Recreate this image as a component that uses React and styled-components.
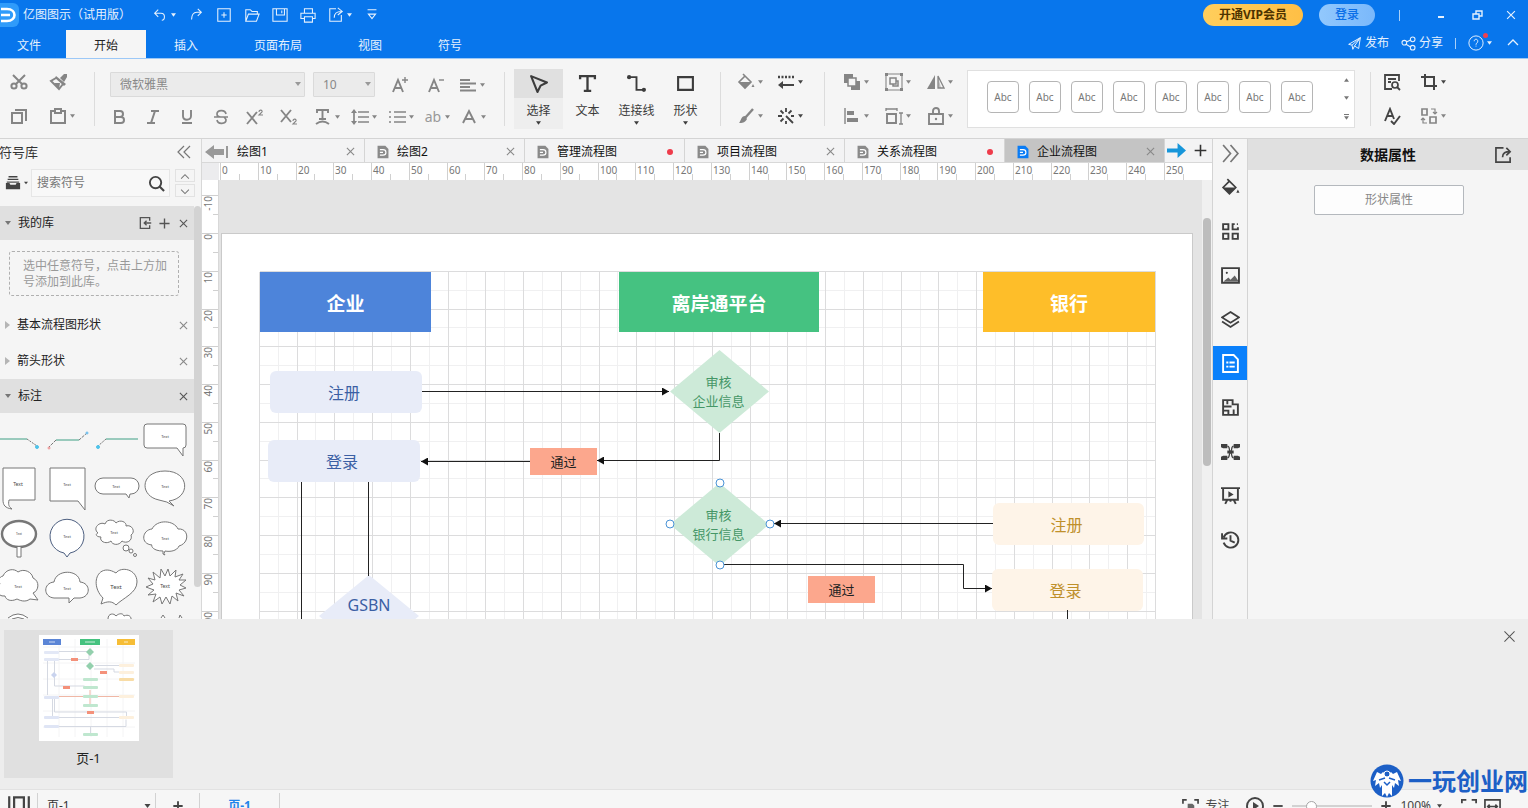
import React from "react";
import styled, { createGlobalStyle, css } from "styled-components";

const GlobalStyle = createGlobalStyle`
  *, *::before, *::after { box-sizing: border-box; }
  html, body { margin: 0; height: 100%; }
  body, button, input, select {
    font-family: "Noto Sans", "Noto Sans CJK SC", sans-serif;
    font-size: 12px;
    line-height: 16px;
  }
  body { color: #222; background: #f5f5f5; overflow: hidden; }
  button { border: 0; padding: 0; background: none; color: inherit; cursor: pointer; }
  svg { display: block; flex: none; }
`;

/* ---------- icons ---------- */

const L = (d, extra) => <path d={d} fill="none" stroke="currentColor" strokeWidth="1.6" {...extra} />;
const F = (d, extra) => <path d={d} fill="currentColor" {...extra} />;

const ICONS = {
  undo: L("M7 3L3 7l4 4M3 7h7c3 0 4 2 4 4s-1 4-3 4", { strokeWidth: 1.2 }),
  redo: L("M11 2l4 4-4 4M15 6h-5c-4 0-6 3-6 8", { strokeWidth: 1.2 }),
  newDoc: L("M2 2h14v14H2zM9 6v6M6 9h6", { strokeWidth: 1.2 }),
  open: L("M2 16V3h5l2 2h6v3M2 16l3-8h12l-3 8z", { strokeWidth: 1.2 }),
  save: L("M1 2h16v14H1zM5 2v7h9V2M11 4v3", { strokeWidth: 1.2 }),
  print: L("M5 7V2h9v5M5 13H1V7h16v6h-3M5 11h9v6H5z", { strokeWidth: 1.2 }),
  share: L("M9 2H2v14h13V9M7 12c0-5 3-7 8-7M11 1l5 4-5 4", { strokeWidth: 1.2 }),
  more: L("M4 3h10M5 8l4 5 4-5z", { strokeWidth: 1.2 }),
  plane: L("M2 10L16 2l-2 13-5-3-2 4-1-5zM6 11l10-9-7 10", { strokeWidth: 1.2 }),
  nodes: (
    <g fill="none" stroke="currentColor" strokeWidth="1.3">
      <circle cx="4" cy="8" r="2.8" /><circle cx="14" cy="4" r="2.8" /><circle cx="14" cy="14" r="2.8" />
      <path d="M7 7l4-2M6 10l5 3" />
    </g>
  ),
  help: (
    <g fill="none" stroke="currentColor" strokeWidth="1.1">
      <circle cx="9" cy="9" r="8" /><path d="M7 7c0-3 4-3 4 0 0 2-2 2-2 4M9 12v1" />
    </g>
  ),
  chevronUp: L("M4 11l5-5 5 5", { strokeWidth: 1.3 }),
  chevronDown: L("M4 6l5 5 5-5", { strokeWidth: 1.3 }),
  min: L("M6 11h6", { strokeWidth: 2 }),
  restore: L("M5 8h6v5H5zM8 8V5h6v5h-3", { strokeWidth: 1.4 }),
  close: L("M4 4l10 10M14 4L4 14", { strokeWidth: 1.5 }),
  closeThin: L("M2 2l14 14M16 2L2 16", { strokeWidth: 1.4 }),
  cut: (
    <g fill="none" stroke="currentColor" strokeWidth="2">
      <circle cx="4" cy="13" r="2.6" /><circle cx="14" cy="13" r="2.6" /><path d="M3 2l9 9M15 2L6 11" />
    </g>
  ),
  brush: (
    <g>
      {F("M7 3l10 8-2 2-9-8zM11 5l4-4h3v3l-3 5z")}
      {L("M7 5L2 8l8 8 4-5", { strokeWidth: 2 })}
      {F("M5 10h6l-1 6z")}
    </g>
  ),
  copy: L("M2 6h10v10H2zM5 3h11v11", { strokeWidth: 2 }),
  paste: L("M6 4H2v12h14V4h-4M6 2h6v4H6z", { strokeWidth: 2 }),
  fontUp: (
    <g>{L("M2 16L7 4l5 12M4 12h6", { strokeWidth: 1.9 })}{L("M14 1v6M11 4h6", { strokeWidth: 1.4 })}</g>
  ),
  fontDown: (
    <g>{L("M2 16L7 4l5 12M4 12h6", { strokeWidth: 1.9 })}{L("M12 4h5", { strokeWidth: 1.4 })}</g>
  ),
  align: L("M1 4h10M1 7.500h16M1 11h10M1 14.500h16", { strokeWidth: 2 }),
  bold: L("M5 3h5a3 3 0 0 1 0 6H5zM5 9h6a3 3 0 0 1 0 6H5z", { strokeWidth: 2 }),
  italic: L("M7 3h8M3 15h8M11 3L7 15", { strokeWidth: 2 }),
  underline: L("M5 2v6c0 5 8 5 8 0V2M4 15h10", { strokeWidth: 1.9 }),
  strike: L("M14 6c-1-5-9-4-9 0 0 2 2 3 4 3M5 12c1 5 9 4 9 0 0-1-1-2-2-3M2 9h14", { strokeWidth: 1.7 }),
  sup: <g>{L("M1 4l10 12M11 4L1 16", { strokeWidth: 1.9 })}{L("M13 4c0-3 4-2 3 0l-3 3h4", { strokeWidth: 1.1 })}</g>,
  sub: <g>{L("M1 2l10 12M11 2L1 14", { strokeWidth: 1.9 })}{L("M13 13c0-3 4-2 3 0l-3 3h4", { strokeWidth: 1.1 })}</g>,
  textFx: L("M3 5V2h11v3M8.500 2v9M5 11h7M2 16c4-3 9-3 13 0", { strokeWidth: 1.9 }),
  spacing: <g>{L("M7 4h11M7 9h11M7 14h11M3 4v10", { strokeWidth: 1.7 })}{F("M0 5l3-4 3 4zM0 13l3 4 3-4z")}</g>,
  list: L("M6 4h12M6 9h12M6 14h12M1 4h2M1 9h2M1 14h2", { strokeWidth: 1.7 }),
  fontColor: L("M3 15L9 3l6 12M5 11h8", { strokeWidth: 1.9 }),
  cursor: L("M2 2l15 6-6 3-3 6z", { strokeWidth: 2, strokeLinejoin: "round" }),
  textTool: L("M2 5V2h14v3M9 2v14M5.500 16h7", { strokeWidth: 2.2 }),
  connector: <g>{L("M3 3h6v12h6", { strokeWidth: 1.8 })}<circle cx="2" cy="3" r="2" fill="currentColor" /><circle cx="16" cy="15" r="2" fill="currentColor" /></g>,
  rect: L("M2 3h14v12H2z", { strokeWidth: 2 }),
  fill: <g>{L("M6 1l8 8-6 6-6-6 6-6", { strokeWidth: 1.6 })}{F("M2 9h12l-6 6zM16 11l1.500 3h-3z")}</g>,
  lineStyle: <g>{L("M1 4h16", { strokeWidth: 2.500, strokeDasharray: "2 1.500" })}{L("M4 12h13", { strokeWidth: 2 })}{F("M1 12l5-4v8z")}</g>,
  pen: <g>{L("M16 2L8 11", { strokeWidth: 2.400 })}{F("M8 9l2 3c-2 4-5 4-8 4 2-2 2-7 6-7z")}</g>,
  magic: L("M9 1v4M9 14v3M1 9h4M14 9h3M3.500 3.500l3 3M14.500 3.500l-3 3M3.500 14.500l3-3M9 9l7 7", { strokeWidth: 1.8 }),
  arrange: <g>{F("M1 1h9v9H1zM8 13h5V8h4v9H8z")}<path d="M5 5h8v8H5z" fill="#f5f5f5" stroke="currentColor" strokeWidth="1.5" /></g>,
  group: <g>{L("M1 1h16v16H1z", { strokeWidth: 1.1 })}{L("M5 5h6v6H5zM11 8h2v5H8v-2", { strokeWidth: 1.5 })}{F("M0 0h3v3H0zM15 0h3v3h-3zM0 15h3v3H0zM15 15h3v3h-3z")}</g>,
  flip: <g>{F("M8 2v14H0z")}{L("M11 3v12h6z", { strokeWidth: 1.3 })}{F("M11 3v12h3z", { opacity: 0.5 })}</g>,
  alignObj: <g>{L("M2 1v16", { strokeWidth: 1.4 })}{F("M4 4h7v4H4zM4 11h11v4H4z")}</g>,
  sizeObj: <g>{L("M2 7h9v9H2z", { strokeWidth: 1.9 })}{L("M1 2h11M1 1v3M12 1v3M16 6v11M14 6h4M14 17h4", { strokeWidth: 1.3 })}</g>,
  lock: <g>{L("M2 7h14v10H2zM6 7V4c0-4 6-4 6 0v3", { strokeWidth: 1.9 })}<circle cx="9" cy="12" r="1.200" fill="currentColor" /></g>,
  findDoc: <g>{L("M16 8V2H2v14h7M5 6h8M5 9h3", { strokeWidth: 1.8 })}<circle cx="12" cy="12" r="3" fill="none" stroke="currentColor" strokeWidth="1.700" />{L("M14 14l3 3", { strokeWidth: 1.8 })}</g>,
  crop: L("M1 4h13v13M5 1v12h12", { strokeWidth: 2 }),
  spell: L("M2 14L7 2l4 10M4 9h6M8 14l3 3 6-8", { strokeWidth: 1.9 }),
  swap: <g>{L("M2 2h5v6H2zM10 10h6v6h-6z", { strokeWidth: 1.700 })}{L("M11 2h4v4M13 5l2 2 2-2M7 16H3v-4M1 13l2-2 2 2", { strokeWidth: 1.2 })}</g>,
  chevronsLeft: L("M9 3L3 9l6 6M15 3L9 9l6 6", { strokeWidth: 1.2 }),
  chevronsRight: L("M2 1l7 8-7 8M9 1l7 8-7 8", { strokeWidth: 1.6 }),
  box: <g>{F("M1 9h4l1 2h6l1-2h4v7H1z")}{L("M4 2h10M3 5h12", { strokeWidth: 1.5 })}{L("M2 8h14", { strokeWidth: 1.300 })}</g>,
  search: <g><circle cx="8" cy="8" r="6" fill="none" stroke="currentColor" strokeWidth="2" />{L("M12 12l5 5", { strokeWidth: 2.2 })}</g>,
  importIn: L("M15 6V2H3v14h12v-4M17 9H8M11 6L8 9l3 3", { strokeWidth: 1.7 }),
  plus: L("M9 2v14M2 9h14", { strokeWidth: 1.9 }),
  plusBold: L("M9 3v12M3 9h12", { strokeWidth: 2.4 }),
  minus: L("M3 9h12", { strokeWidth: 2.4 }),
  doc: <g>{F("M2 1h10l4 4v12H2z")}<path d="M5 6h4c5 0 5 7 0 7H5M5 9.500h4" fill="none" stroke="#fff" strokeWidth="1.500" /></g>,
  arrowRight: F("M0 7h10V2l8 7-8 7v-5H0z"),
  symbols: L("M2 2h5v5H2zM2 11h5v5H2zM11 11h5v5h-5zM13 2h-2v5h5V5M15 2h1", { strokeWidth: 1.8 }),
  image: <g>{L("M1 2h16v14H1z", { strokeWidth: 1.8 })}{F("M2 15l5-4 2 2 4-4 4 6z", { opacity: 0.8 })}<circle cx="5.500" cy="6.500" r="1" fill="currentColor" /></g>,
  layers: L("M9 2l8 5-8 5-8-5zM1 11l8 5 8-5", { strokeWidth: 1.7 }),
  dataDoc: L("M2 1h10l4 4v12H2zM5 8h2M8 8h5M5 12h2M8 12h5", { strokeWidth: 1.8 }),
  floor: L("M2 2h9v4h5v10H2zM2 8h5M6 2v4M2 12h5v4M12 16v-5M7 8h3", { strokeWidth: 1.8 }),
  mind: <g>{F("M0 2h6v4H2L0 5zM12 2h6v3l-2 1h-4zM0 14l2-1h4v4H0zM12 13h4l2 1v3h-6zM6 8h6v3H6z")}{L("M6 4c3 0 1 5 3 5s0-5 3-5M6 15c3 0 1-5 3-5s0 5 3 5", { strokeWidth: 1.2 })}</g>,
  present: <g>{L("M0 2h18M2 2v11h14V2M6 13l-2 4M12 13l2 4M9 13v2", { strokeWidth: 1.8 })}{F("M7 5l5 3-5 3z")}</g>,
  history: L("M1 3v5h5M2.500 7a7.200 7.200 0 1 1 0 5M9 5v5l4 2", { strokeWidth: 1.8 }),
  export: L("M9 2H1v15h15v-5M8 12c0-5 3-6 8-6M12 2l4 4-4 4", { strokeWidth: 1.8 }),
  panels: L("M5 2h8v14H5zM1 1v16M17 1v16", { strokeWidth: 1.8 }),
  focus: <g>{L("M1 6V2h4M13 2h4v4M1 12v4h4M13 16h4v-4", { strokeWidth: 1.8 })}{F("M6 6h5l2 2v7H6z", { opacity: 0.8 })}</g>,
  play: <g><circle cx="9" cy="9" r="8" fill="none" stroke="currentColor" strokeWidth="1.900" />{F("M7 5l6 4-6 4z")}</g>,
  fit: L("M1 6V2h5M12 2h5v4M1 12v4h5M12 16h5v-4", { strokeWidth: 2 }),
  fitWidth: L("M1 2h16v14H1zM4 9h10M6 7L4 9l2 2M12 7l2 2-2 2", { strokeWidth: 1.8 }),
};

const Icon = ({ name, size = 18 }) => (
  <svg width={size} height={size} viewBox="0 0 18 18" aria-hidden="true">{ICONS[name]}</svg>
);

const Caret = ({ size = 6, up }) => (
  <svg width={size} height="4" viewBox="0 0 6 4" aria-hidden="true">
    <path d={up ? "M0 4h6L3 0z" : "M0 0h6L3 4z"} fill="currentColor" />
  </svg>
);

/* ---------- window frame ---------- */

const Window = styled.div`
  position: relative;
  display: flex;
  flex-direction: column;
  height: 100vh;
  overflow: hidden;
`;

const Header = styled.header`
  flex: none;
  color: #e6f1fd;
  background: #0876ec;
  border-bottom: 1px solid #9cc8f7;
`;

const TitleRow = styled.div`
  display: flex;
  align-items: center;
  height: 30px;
`;

const Logo = styled.div`
  display: grid;
  place-items: center;
  width: 19px;
  height: 24px;
  margin-right: 4px;
  border-radius: 0 6px 6px 0;
  background: #2f9bfa;
  color: #fff;
`;

const AppName = styled.span`
  width: 129px;
  white-space: nowrap;
`;

const QuickBar = styled.div`
  display: flex;
  align-items: center;
  gap: 12px;
`;

const QuickButton = styled.button`
  display: flex;
  align-items: center;
  gap: 3px;
`;

const Spacer = styled.div`
  flex: 1;
`;

const Pill = styled.button`
  height: 22px;
  padding: 0 16px;
  margin-right: ${(p) => (p.$gold ? 16 : 24)}px;
  border-radius: 11px;
  white-space: nowrap;
  ${(p) =>
    p.$gold
      ? css`color: #4d3300; font-weight: 700; background: linear-gradient(90deg, #ffce5c, #ffbf45);`
      : css`color: #0a6ee8; font-weight: 500; background: linear-gradient(90deg, #92c8fd, #7ab8fb);`}
`;

const Bar = styled.span`
  width: 1px;
  height: 11px;
  background: #a9d0f8;
`;

const WindowControls = styled.div`
  display: flex;
  align-items: center;
  gap: 18px;
  margin: 0 10px 0 32px;
`;

const TabRow = styled.nav`
  display: flex;
  align-items: flex-end;
  height: 28px;
`;

const MenuTab = styled.button`
  height: 28px;
  padding: 3px 28px 0;
  white-space: nowrap;
  ${(p) => p.$file && css`padding: 3px 17px 0; margin-right: 8px;`}
  ${(p) => p.$active && css`color: #222; background: #f5f5f5;`}
`;

const HeaderActions = styled.div`
  display: flex;
  align-items: center;
  align-self: flex-start;
  gap: 12px;
  height: 26px;
  padding-right: 6px;
`;

const HeaderAction = styled.button`
  position: relative;
  display: flex;
  align-items: center;
  gap: 3px;
  white-space: nowrap;
`;

const Badge = styled.i`
  position: absolute;
  top: -2px;
  left: 15px;
  width: 5px;
  height: 5px;
  border-radius: 50%;
  background: #f0404f;
`;

/* ---------- ribbon ---------- */

const Ribbon = styled.div`
  flex: none;
  display: flex;
  align-items: center;
  height: 80px;
  overflow: hidden;
  color: #555;
  background: #f5f5f5;
  border-bottom: 1px solid #d4d4d4;
`;

const Divider = styled.div`
  flex: none;
  width: 1px;
  height: 54px;
  background: #dcdcdc;
`;

const ToolGrid = styled.div`
  flex: none;
  display: grid;
  grid-template-columns: repeat(${(p) => p.$cols}, ${(p) => p.$col}px);
  grid-auto-rows: 34px;
  align-items: center;
  padding-left: ${(p) => p.$pad}px;
  width: ${(p) => p.$width}px;
`;

const ToolButton = styled.button`
  display: flex;
  align-items: center;
  gap: 3px;
  height: 24px;
  color: ${(p) => (p.$strong ? "#444" : "#858585")};
`;

const FormatGroup = styled.div`
  flex: none;
  width: 409px;
  padding: 4px 0 0 15px;
`;

const FormatRow = styled.div`
  display: grid;
  align-items: center;
  height: 32px;
  grid-template-columns: ${(p) => (p.$top ? "195px 8px 62px 16px 36px 32px 32px" : "repeat(6, 34px) repeat(2, 37px) repeat(3, 36px)")};
`;

const SelectBox = styled.label`
  position: relative;
  display: block;
  color: #999;
  & > svg { position: absolute; right: 4px; top: 10px; pointer-events: none; }
`;

const Select = styled.select`
  appearance: none;
  width: 100%;
  height: 25px;
  padding: 0 9px;
  border: 1px solid #dadada;
  border-radius: 1px;
  color: #888;
  background: #ebebeb;
`;

const AbIcon = styled.span`
  width: 18px;
  font-size: 14px;
  color: #999;
`;

const InsertGroup = styled.div`
  flex: none;
  display: flex;
  padding: 0 10px 0 9px;
`;

const InsertButton = styled.button`
  display: flex;
  flex-direction: column;
  align-items: center;
  width: 49px;
  height: 60px;
  color: #3c3c3c;
  background: ${(p) => (p.$active ? "linear-gradient(#e0e0e0 29px, #eeeeee 29px)" : "none")};
  & > span:first-child { display: grid; place-items: center; height: 30px; }
  & > span:nth-child(2) { height: 22px; line-height: 24px; white-space: nowrap; }
`;

const Gallery = styled.div`
  flex: 0 1 388px;
  display: flex;
  justify-content: space-between;
  height: 58px;
  margin-right: 15px;
  padding: 0 5px 0 19px;
  overflow: hidden;
  background: #fff;
  border: 1px solid #e0e0e0;
`;

const Samples = styled.div`
  display: flex;
  align-items: center;
  gap: 10px;
  overflow: hidden;
`;

const Sample = styled.button`
  flex: none;
  width: 32px;
  height: 32px;
  margin-bottom: 3px;
  border: 1px solid #b5b5b5;
  border-radius: 4px;
  font-size: 10px;
  color: #777;
`;

const GalleryScroll = styled.div`
  display: flex;
  flex-direction: column;
  justify-content: space-around;
  color: #777;
`;

const ExpandButton = styled.button`
  padding-top: 1px;
  border-top: 1px solid #777;
`;

/* ---------- symbol library ---------- */

const Main = styled.main`
  flex: 1;
  display: flex;
  min-height: 0;
`;

const Library = styled.aside`
  flex: none;
  display: flex;
  flex-direction: column;
  width: 202px;
  overflow: hidden;
  background: #f5f5f5;
  border-right: 1px solid #d8d8d8;
`;

const LibraryTitle = styled.div`
  flex: none;
  display: flex;
  align-items: center;
  justify-content: space-between;
  height: 26px;
  margin-left: -1px;
  padding-right: 8px;
  font-size: 13px;
  color: #333;
  & > button { color: #777; }
`;

const SearchRow = styled.div`
  flex: none;
  display: flex;
  align-items: center;
  height: 41px;
  padding: 0 5px 5px;
  color: #444;
`;

const SearchField = styled.label`
  display: flex;
  align-items: center;
  flex: 1;
  min-width: 0;
  height: 28px;
  margin: 0 5px 0 3px;
  padding: 0 4px 0 5px;
  border: 1px solid #e6e6e6;
  background: #f8f8f8;
`;

const SearchInput = styled.input`
  flex: 1;
  min-width: 0;
  padding: 0;
  border: 0;
  outline: 0;
  background: none;
  &::placeholder { color: #777; opacity: 1; }
`;

const Stepper = styled.div`
  display: grid;
  gap: 2px;
  margin-right: 1px;
`;

const StepButton = styled.button`
  display: grid;
  place-items: center;
  width: 20px;
  height: 13px;
  border: 1px solid #e2e2e2;
  color: #777;
`;

const LibraryScroll = styled.div`
  flex: 1;
  display: flex;
  align-items: flex-start;
  min-height: 0;
  overflow: hidden;
`;

const LibraryList = styled.div`
  flex: 1;
  min-width: 0;
`;

const Thumb = styled.div`
  flex: none;
  width: ${(p) => p.$width}px;
  height: ${(p) => p.$height};
  margin: ${(p) => p.$margin || 0};
  border-radius: 4px;
  background: ${(p) => p.$color};
`;

const Section = styled.div`
  display: flex;
  align-items: center;
  gap: 6px;
  height: ${(p) => (p.$open ? 34 : 36)}px;
  padding: 0 4px;
  color: ${(p) => (p.$open ? "#777" : "#b5b5b5")};
  background: ${(p) => (p.$open ? "#e0e0e0" : "none")};
  & > span { flex: 1; color: #222; white-space: nowrap; }
  & > button { color: ${(p) => (p.$open ? "#555" : "#888")}; }
`;

const EmptyHint = styled.p`
  margin: 11px 15px 11px 9px;
  padding: 6px 9px 5px 13px;
  border: 1px dashed #b0b0b0;
  border-radius: 3px;
  color: #999;
`;

const ShapeGrid = styled.div`
  display: grid;
  grid-template-columns: repeat(4, 49px);
  grid-auto-rows: 49px;
  margin-left: -6px;
`;

/* ---------- drawing area ---------- */

const Workspace = styled.section`
  flex: 1;
  display: flex;
  flex-direction: column;
  min-width: 0;
`;

const DocTabs = styled.div`
  flex: none;
  display: flex;
  height: 24px;
  padding-left: 3px;
  background: #f3f3f4;
  border-bottom: 1px solid #d8d8d8;
`;

const DocTab = styled.div`
  flex: 0 1 160px;
  display: flex;
  align-items: center;
  min-width: 0;
  padding: 2px 7px 0 ${(p) => (p.$first ? 0 : 11)}px;
  border-right: 1px solid #d5d5d5;
  color: #888;
  background: ${(p) => (p.$active ? "#c4c4c4" : "none")};
  & > span { flex: 1; margin-left: 7px; color: #111; white-space: nowrap; }
  & > svg { color: ${(p) => (p.$active ? "#0a7cf5" : "#8a8a8a")}; }
`;

const Unsaved = styled.i`
  width: 6px;
  height: 6px;
  margin-right: 4px;
  border-radius: 50%;
  background: #ee3b4b;
`;

const DocTabActions = styled.div`
  flex: none;
  display: flex;
  align-items: center;
  gap: 7px;
  padding-left: 2px;
  color: #333;
  & > button:first-child { color: #1796da; }
`;

const RulerStrip = styled.div`
  flex: none;
  height: 17px;
  overflow: hidden;
  background: #fff;
`;

const DrawRow = styled.div`
  flex: 1;
  display: flex;
  min-height: 0;
  overflow: hidden;
`;

const SideRuler = styled.div`
  flex: none;
  width: 17px;
  overflow: hidden;
  background: #fff;
`;

const Canvas = styled.div`
  flex: 1;
  position: relative;
  min-width: 0;
  overflow: hidden;
  background: #e4e4e4;
`;

const Sheet = styled.div`
  position: absolute;
  left: 2px;
  top: 53px;
  width: 972px;
  height: 1000px;
  background: #fff;
  border: 1px solid #cacaca;
  & > svg { position: absolute; left: 0; top: 0; }
`;

const Node = styled.div`
  position: absolute;
  left: ${(p) => p.$x}px;
  top: ${(p) => p.$y}px;
  width: ${(p) => p.$w}px;
  height: ${(p) => p.$h}px;
  display: flex;
  flex-direction: column;
  align-items: center;
  justify-content: center;
  white-space: nowrap;
  text-align: center;
`;

const Lane = styled(Node)`
  padding-top: 4px;
  color: #fff;
  font-size: 19px;
  line-height: 24px;
  font-weight: 700;
  background: ${(p) => p.$fill};
`;

const Step = styled(Node)`
  padding: 2px 4px 0 0;
  border-radius: 6px;
  font-size: 16px;
  line-height: 22px;
  color: ${(p) => (p.$bank ? "#bf902b" : "#3b5fa4")};
  background: ${(p) => (p.$bank ? "#fef4e8" : "#e8ecf8")};
`;

const Decision = styled(Node)`
  clip-path: polygon(50% 0, 100% 50%, 50% 100%, 0 50%);
  padding-right: 2px;
  font-size: 13px;
  line-height: 19px;
  color: #459767;
  background: #cdead8;
  ${(p) => p.$blue && css`padding: 0 0 21px; font-size: 16px; color: #3b5fa4; background: #e8ecf8;`}
`;

const Verdict = styled(Node)`
  font-size: 13px;
  color: #222;
  background: #fca78d;
`;

const ScrollTrack = styled.div`
  flex: none;
  width: 10px;
  background: #f0f0f0;
`;

/* ---------- right side ---------- */

const Rail = styled.nav`
  flex: none;
  display: flex;
  flex-direction: column;
  align-items: center;
  width: 36px;
  border: solid #d4d4d4;
  border-width: 0 1px;
  background: #f5f5f5;
`;

const RailButton = styled.button`
  flex: none;
  display: grid;
  place-items: center;
  width: 34px;
  height: ${(p) => (p.$fold ? 28 : 34)}px;
  margin-bottom: ${(p) => (p.$fold ? 3 : 10)}px;
  color: ${(p) => (p.$fold ? "#777" : p.$active ? "#fff" : "#3f3f3f")};
  background: ${(p) => (p.$active ? "#0a80fb" : "none")};
`;

const Properties = styled.aside`
  flex: none;
  width: 280px;
  text-align: center;
  background: #f5f5f5;
`;

const PropertiesHeader = styled.div`
  display: grid;
  grid-template-columns: 34px 1fr 34px;
  place-items: center;
  height: 31px;
  padding-right: 8px;
  margin-bottom: 15px;
  color: #444;
  background: #e0e0e0;
`;

const PanelTitle = styled.h2`
  margin: 0 0 0 8px;
  font-size: 14px;
  color: #111;
`;

const OutlineButton = styled.button`
  width: 150px;
  height: 30px;
  margin-left: 2px;
  border: 1px solid #b4b8bd;
  border-radius: 2px;
  color: #888;
  background: #fdfdfd;
`;

/* ---------- page strip and status bar ---------- */

const Pages = styled.section`
  flex: none;
  display: flex;
  justify-content: space-between;
  align-items: flex-start;
  height: 170px;
  padding: 11px 12px 0 4px;
  color: #555;
  background: #ededed;
`;

const PageCard = styled.button`
  display: flex;
  flex-direction: column;
  align-items: center;
  gap: 9px;
  width: 169px;
  height: 148px;
  padding-top: 5px;
  font-size: 13px;
  color: #222;
  background: #e0e0e0;
`;

const StatusBar = styled.footer`
  flex: none;
  height: 19px;
  overflow: hidden;
  border-top: 1px solid #e2e2e2;
  background: #f6f6f6;
`;

const StatusRow = styled.div`
  display: flex;
  align-items: center;
  height: 32px;
  color: #444;
`;

const StatusCell = styled.div`
  flex: none;
  display: grid;
  place-items: center;
  width: ${(p) => p.$w}px;
  height: 26px;
  border-right: 1px solid #d2d2d2;
  & > button { color: ${(p) => (p.$current ? "#1f84ea" : "inherit")}; font-weight: ${(p) => (p.$current ? 700 : 400)}; }
`;

const PageSelect = styled.select`
  appearance: none;
  width: 100%;
  padding: 0 9px;
  border: 0;
  font-size: 12px;
  background: none;
  color: #333;
`;

const PagePicker = styled.label`
  position: relative;
  width: 100%;
  & > svg { position: absolute; right: 4px; top: 6px; }
`;

const StatusTools = styled.div`
  display: flex;
  align-items: center;
  gap: 7px;
  padding-right: 27px;
  color: #444;
`;

const StatusButton = styled.button`
  display: flex;
  align-items: center;
  gap: 6px;
  margin-right: ${(p) => p.$after || 0}px;
  white-space: nowrap;
`;

const Zoom = styled.input`
  appearance: none;
  width: 80px;
  height: 12px;
  margin: 0;
  background: linear-gradient(#d2d2d2, #d2d2d2) center / 100% 2px no-repeat;
  &::-webkit-slider-thumb {
    appearance: none;
    width: 11px;
    height: 11px;
    border: 1px solid #a5a5a5;
    border-radius: 50%;
    background: #fff;
  }
`;

const Watermark = styled.div`
  position: absolute;
  right: 0;
  bottom: 10px;
  display: flex;
  align-items: center;
  gap: 4px;
  font-size: 24px;
  line-height: 34px;
  font-weight: 700;
  color: #1c5fc6;
  white-space: nowrap;
`;

/* ---------- data ---------- */

const UNIT = 3.776; // pixels per millimetre at 100%
const mm = (n) => Math.round(n * UNIT);

const MENU = ["文件", "开始", "插入", "页面布局", "视图", "符号"];

const QUICK = [
  ["undo", "撤销", true], ["redo", "重做"], ["newDoc", "新建"], ["open", "打开"],
  ["save", "保存"], ["print", "打印"], ["share", "导出", true], ["more", "更多"],
];

const TEXT_TOOLS = [
  ["bold", "加粗"], ["italic", "斜体"], ["underline", "下划线"], ["strike", "删除线"],
  ["sup", "上标"], ["sub", "下标"], ["textFx", "文字效果", true], ["spacing", "行距", true],
  ["list", "列表", true], ["ab", "大小写", true], ["fontColor", "字体颜色", true],
];

const INSERT = [
  ["cursor", "选择", true], ["textTool", "文本"], ["connector", "连接线", true], ["rect", "形状", true],
];

const DOCS = [
  { name: "绘图1", first: true }, { name: "绘图2" }, { name: "管理流程图", dirty: true },
  { name: "项目流程图" }, { name: "关系流程图", dirty: true }, { name: "企业流程图", active: true },
];

const RAIL = [
  ["fill", "样式"], ["symbols", "符号"], ["image", "图片"], ["layers", "图层"], ["dataDoc", "数据属性"],
  ["floor", "平面图"], ["mind", "思维导图"], ["present", "演示"], ["history", "历史"],
];

const Tool = ({ icon, label, menu, strong }) => (
  <ToolButton aria-label={label} $strong={strong}>
    {icon === "ab" ? <AbIcon>ab</AbIcon> : <Icon name={icon} />}
    {menu && <Caret size={5} />}
  </ToolButton>
);

/* ---------- drawings ---------- */

const LABEL = { fontSize: 10, fill: "#777" };

const TopRuler = () => {
  const marks = Array.from({ length: 26 }, (_, i) => i * 10);
  return (
    <svg width="1000" height="17">
      <rect width="17" height="17" fill="#ececee" />
      {marks.map((n) => (
        <g key={n}>
          <path d={`M${18.5 + mm(n)} 0v17M${18.5 + mm(n + 5)} 11v6`} stroke="#d0d0d0" />
          <text x={20 + mm(n)} y="11" {...LABEL}>{n}</text>
        </g>
      ))}
    </svg>
  );
};

const LeftRuler = () => {
  const marks = [-10, 0, 10, 20, 30, 40, 50, 60, 70, 80, 90, 100];
  return (
    <svg width="17" height="600">
      {marks.map((n) => (
        <g key={n}>
          <path d={`M0 ${53.5 + mm(n)}h17M11 ${53.5 + mm(n + 5)}h6`} stroke="#d0d0d0" />
          <text transform={`translate(10 ${54 + mm(n)}) rotate(-90)`} textAnchor="end" {...LABEL}>{n}</text>
        </g>
      ))}
      <path d="M16.500 0v600" stroke="#d8d8d8" />
    </svg>
  );
};

const GridLines = () => {
  const minor = [];
  const major = [];
  for (let n = 10; n <= 245; n += 5) (n % 10 ? minor : major).push(`M${mm(n) - 1}.5 38v900`);
  for (let n = 10; n <= 245; n += 5) (n % 10 ? minor : major).push(`M38 ${mm(n) - 1}.5h896`);
  return (
    <svg width="970" height="940">
      <path d={minor.join("")} stroke="#f0f0f1" />
      <path d={major.join("") + "M933.500 38v900"} stroke="#dcdcdd" />
    </svg>
  );
};

const Connectors = () => (
  <svg width="970" height="940" fill="none" stroke="#222">
    <defs>
      <marker id="tip" markerWidth="8" markerHeight="8" refX="7" refY="4" orient="auto" markerUnits="userSpaceOnUse">
        <path d="M0 0l7 4-7 4z" fill="#111" stroke="none" />
      </marker>
    </defs>
    <path d="M200 157.500H447" markerEnd="url(#tip)" />
    <path d="M497.500 199V226.500H375" markerEnd="url(#tip)" />
    <path d="M308 227.500H199" markerEnd="url(#tip)" />
    <path d="M771 289.500H552" markerEnd="url(#tip)" />
    <path d="M498 330.500H741.500V354.500H770" markerEnd="url(#tip)" />
    <path d="M79.500 248V900M146.500 248V342M845.500 376V420" />
  </svg>
);

const Handles = () => (
  <svg width="970" height="940" fill="#fff" stroke="#4a93d6">
    {[[448, 290], [548, 290], [498, 249], [498, 331]].map(([x, y]) => (
      <circle key={`${x}-${y}`} cx={x} cy={y} r="4" />
    ))}
  </svg>
);

const T = ({ x = 24, y = 26, s = 4 }) => (
  <text x={x} y={y} fontSize={s} textAnchor="middle" fill="#444" stroke="none">Text</text>
);

const SHAPES = [
  <g><path d="M0 26h33" stroke="#3f9f84" /><path d="M33 26l10 7" strokeDasharray="2 1" /><circle cx="43" cy="34" r="1.500" fill="#4fc3ea" stroke="#4fc3ea" /></g>,
  <g><path d="M13 27h23" stroke="#3f9f84" /><path d="M13 27l-7 7M36 27l8-7" strokeDasharray="3 1" /><circle cx="6" cy="35" r="1" stroke="#e88" /><circle cx="44" cy="20" r="1" stroke="#4fb0ea" /></g>,
  <g><path d="M14 26h32" stroke="#3f9f84" /><path d="M14 26l-8 7" strokeDasharray="2 1" /><circle cx="6" cy="34" r="1.500" fill="#4fc3ea" stroke="#4fc3ea" /></g>,
  <g><path d="M6 11h36q3 0 3 3v18q0 3-3 3v8l-6-8H6q-3 0-3-3V14q0-3 3-3z" /><T y={25} /></g>,
  <g><path d="M9 6h32v32H15c-1 5 0 7 3 9-7-1-9-4-9-9z" /><T y={24} s={5} /></g>,
  <g><path d="M7 6h35v42l-7-9H7z" /><T y={24} /></g>,
  <g><path d="M11 16h28a8 8 0 0 1 0 16h-1l-1 4-3-4H11a8 8 0 0 1 0-16z" /><T y={26} /></g>,
  <g><path d="M28 39c22-3 21-30-4-30S-2 34 18 38q8 1 15 6z" /><T /></g>,
  <g><ellipse cx="25" cy="23" rx="17" ry="13" strokeWidth="2.400" /><path d="M23 36v10h4V36" /><T x={25} y={24} s={3} /></g>,
  <g><path d="M27 42a17 17 0 1 0-6 0l3 4z" stroke="#4d5f80" /><T y={27} /></g>,
  <g><path d="M6 22c-6-5 2-12 7-9 2-6 10-4 11-1 4-4 11-1 10 3 6-2 10 6 5 9 2 6-5 9-9 6-3 5-10 4-11 0-5 4-12 0-10-4-5 0-6-3-3-4z" /><circle cx="34" cy="37" r="3" /><circle cx="39" cy="40" r="2" /><circle cx="43" cy="44" r="1.500" /><T x={22} y={23} /></g>,
  <g><path d="M22 40c-10 0-12-5-11-6-12-1-10-15 0-16 5-10 22-9 26 0 11-1 12 14 1 17-2 5-9 6-14 5q-2 3 0 4-3 0-2-4z" /><T y={29} /></g>,
  <g><path d="M9 16c3-7 11-8 15-4 6-4 14 0 15 6 7 3 6 13 0 15l5 7-8-1c-5 4-11 1-13 0-6 3-11 1-12-3-9 1-9-9-5-12-2-4-1-7 3-8z" /><T y={28} /></g>,
  <g><path d="M11 38c-11-1-11-15 0-16 2-13 25-13 26 0 11 1 11 15 0 16h-6l-5 5v-5z" /><T y={30} /></g>,
  <g><path d="M24 13c5-7 21-4 21 9 0 11-14 16-21 23-4-4-8-4-15-1l2-6c-14-14-5-36 13-25z" /><T y={29} s={6} /></g>,
  <g><path d="M24 16l3-7 2 7 6-6-1 7 8-3-4 6 7 0-6 5 6 3-7 2 5 6-8-3 2 8-6-5-2 8-4-7-4 7-2-7-7 5 3-8-8 1 6-5-8-3 7-3-5-6 7 2-2-8 7 6 1-9z" /><T y={28} s={5} /></g>,
  <g><path d="M14 9q10-8 20 0M18 10q6-3 12 0" /></g>,
  <g />,
  <g><path d="M16 10c0-6 6-6 8-3 3-3 7-3 8 0 4-2 8 0 7 5" /></g>,
  <g><path d="M20 9l2-3 2 3M38 9l1-3 2 3" /></g>,
];

const Thumbnail = () => {
  const steps = [[5, 16, "#e3e8f6"], [5, 23, "#e3e8f6"], [5, 61, "#dfe5f5"], [5, 81, "#dfe5f5"], [5, 90, "#dfe5f5"],
    [44, 43, "#bfe7cf"], [44, 51, "#bfe7cf"], [44, 60, "#bfe7cf"], [44, 69, "#bfe7cf"], [44, 98, "#bfe7cf"],
    [80, 29, "#fdf0dd"], [80, 36, "#fdf0dd"], [80, 43, "#f8dca6"], [80, 60, "#fdf0dd"], [80, 81, "#fdf0dd"]];
  return (
    <svg width="100" height="106" viewBox="0 0 100 106">
      <rect width="100" height="106" fill="#fff" />
      <path d="M4 12h92M4 28h92M4 44h92M4 60h92M4 76h92M4 92h92M20 4v98M36 4v98M52 4v98M68 4v98M84 4v98" stroke="#f4f4f5" />
      <path d="M4 4h18v6H4z" fill="#5b85d6" /><path d="M41 4h20v6H41z" fill="#45c27f" /><path d="M78 4h18v6H78z" fill="#f6bd36" />
      <path d="M20 16.500h28M20 24.500h30v-6M56 30.500h24M55 34h20v3h5M8.500 26v34M15.500 26v25h30M13.500 63v18M15.500 63v14h72v4M20 82.500h60M20 91.500h67v-7M51.500 92v6" fill="none" stroke="#d5d9e2" />
      <path d="M20 61.500h60M51 55v16" stroke="#f0b7a5" />
      {steps.map(([x, y, c]) => <rect key={`${x}-${y}`} x={x} y={y} width="15" height="3" rx="1" fill={c} />)}
      {[[32, 23], [61, 36], [24, 51], [48, 76]].map(([x, y]) => <rect key={x} x={x} y={y} width="7" height="3" fill="#f4917a" />)}
      <path d="M51 13l4 4-4 4-4-4zM51 27l4 4-4 4-4-4z" fill="#93d0ad" /><path d="M15 37l3 3-3 3-3-3z" fill="#c9d3ee" />
      <path d="M10 7h6M46 7h10M85 7h4" stroke="#fff" opacity="0.7" />
    </svg>
  );
};

/* ---------- page ---------- */

export default function App() {
  return (
    <Window>
      <GlobalStyle />
      <Header>
        <TitleRow>
          <Logo>
            <svg width="18" height="18" viewBox="0 0 18 18">
              <path d="M0 3h6c10 0 10 12 0 12H0M0 9h9" fill="none" stroke="currentColor" strokeWidth="2.600" />
            </svg>
          </Logo>
          <AppName>亿图图示（试用版）</AppName>
          <QuickBar>
            {QUICK.map(([icon, label, menu]) => (
              <QuickButton key={icon} aria-label={label}>
                <Icon name={icon} size={16} />
                {menu && <Caret size={5} />}
              </QuickButton>
            ))}
          </QuickBar>
          <Spacer />
          <Pill $gold>开通VIP会员</Pill>
          <Pill>登录</Pill>
          <Bar />
          <WindowControls>
            <button aria-label="最小化"><Icon name="min" /></button>
            <button aria-label="还原"><Icon name="restore" /></button>
            <button aria-label="关闭"><Icon name="close" size={14} /></button>
          </WindowControls>
        </TitleRow>
        <TabRow>
          {MENU.map((name, i) => (
            <MenuTab key={name} $file={i === 0} $active={i === 1}>{name}</MenuTab>
          ))}
          <Spacer />
          <HeaderActions>
            <HeaderAction><Icon name="plane" size={15} />发布</HeaderAction>
            <HeaderAction><Icon name="nodes" size={15} />分享</HeaderAction>
            <Bar />
            <HeaderAction aria-label="帮助"><Icon name="help" size={16} /><Badge /><Caret size={5} /></HeaderAction>
            <HeaderAction aria-label="收起功能区"><Icon name="chevronUp" size={18} /></HeaderAction>
          </HeaderActions>
        </TabRow>
      </Header>

      <Ribbon>
        <ToolGrid $cols={2} $col={39} $pad={10} $width={94}>
          <Tool icon="cut" label="剪切" />
          <Tool icon="brush" label="格式刷" />
          <Tool icon="copy" label="复制" />
          <Tool icon="paste" label="粘贴" menu />
        </ToolGrid>
        <Divider />
        <FormatGroup>
          <FormatRow $top>
            <SelectBox aria-label="字体"><Select><option>微软雅黑</option></Select><Caret /></SelectBox>
            <span />
            <SelectBox aria-label="字号"><Select><option>10</option></Select><Caret /></SelectBox>
            <span />
            <Tool icon="fontUp" label="增大字号" />
            <Tool icon="fontDown" label="减小字号" />
            <Tool icon="align" label="对齐" menu />
          </FormatRow>
          <FormatRow>
            {TEXT_TOOLS.map(([icon, label, menu]) => <Tool key={icon} icon={icon} label={label} menu={menu} />)}
          </FormatRow>
        </FormatGroup>
        <Divider />
        <InsertGroup>
          {INSERT.map(([icon, label, menu], i) => (
            <InsertButton key={icon} $active={i === 0}>
              <span><Icon name={icon} size={19} /></span>
              <span>{label}</span>
              {menu && <Caret size={5} />}
            </InsertButton>
          ))}
        </InsertGroup>
        <Divider />
        <ToolGrid $cols={2} $col={40} $pad={16} $width={103}>
          <Tool icon="fill" label="填充" menu />
          <Tool icon="lineStyle" label="线条样式" menu strong />
          <Tool icon="pen" label="线条颜色" menu />
          <Tool icon="magic" label="效果" menu strong />
        </ToolGrid>
        <Divider />
        <ToolGrid $cols={3} $col={42} $pad={18} $width={142}>
          <Tool icon="arrange" label="排列" menu />
          <Tool icon="group" label="组合" menu />
          <Tool icon="flip" label="翻转" menu />
          <Tool icon="alignObj" label="对齐对象" menu />
          <Tool icon="sizeObj" label="大小" menu />
          <Tool icon="lock" label="锁定" menu />
        </ToolGrid>
        <Gallery>
          <Samples>
            {Array.from({ length: 8 }, (_, i) => <Sample key={i}>Abc</Sample>)}
          </Samples>
          <GalleryScroll>
            <button aria-label="上一行"><Caret size={5} up /></button>
            <button aria-label="下一行"><Caret size={5} /></button>
            <ExpandButton aria-label="展开样式"><Caret size={5} /></ExpandButton>
          </GalleryScroll>
        </Gallery>
        <Divider />
        <ToolGrid $cols={2} $col={37} $pad={12} $width={90}>
          <Tool icon="findDoc" label="查找" strong />
          <Tool icon="crop" label="裁剪" menu strong />
          <Tool icon="spell" label="拼写检查" strong />
          <Tool icon="swap" label="替换形状" menu />
        </ToolGrid>
      </Ribbon>

      <Main>
        <Library>
          <LibraryTitle>
            符号库
            <button aria-label="收起符号库"><Icon name="chevronsLeft" /></button>
          </LibraryTitle>
          <SearchRow>
            <ToolButton aria-label="打开符号库" $strong><Icon name="box" size={16} /><Caret size={4} /></ToolButton>
            <SearchField>
              <SearchInput type="text" placeholder="搜索符号" aria-label="搜索符号" />
              <Icon name="search" size={17} />
            </SearchField>
            <Stepper>
              <StepButton aria-label="上一个"><Icon name="chevronUp" size={14} /></StepButton>
              <StepButton aria-label="下一个"><Icon name="chevronDown" size={14} /></StepButton>
            </Stepper>
          </SearchRow>
          <LibraryScroll>
            <LibraryList>
              <Section $open>
                <Caret size={8} />
                <span>我的库</span>
                <button aria-label="导入"><Icon name="importIn" size={14} /></button>
                <button aria-label="添加"><Icon name="plus" size={13} /></button>
                <button aria-label="关闭我的库"><Icon name="close" size={13} /></button>
              </Section>
              <EmptyHint>选中任意符号，点击上方加号添加到此库。</EmptyHint>
              {["基本流程图形状", "箭头形状"].map((name) => (
                <Section key={name}>
                  <svg width="7" height="8" viewBox="0 0 7 8"><path d="M1 0v8l5-4z" fill="currentColor" /></svg>
                  <span>{name}</span>
                  <button aria-label={`关闭${name}`}><Icon name="close" size={13} /></button>
                </Section>
              ))}
              <Section $open>
                <Caret size={8} />
                <span>标注</span>
                <button aria-label="关闭标注"><Icon name="close" size={13} /></button>
              </Section>
              <ShapeGrid>
                {SHAPES.map((shape, i) => (
                  <svg key={i} width="49" height="49" viewBox="0 0 49 49" fill="#fff" stroke="#777">{shape}</svg>
                ))}
              </ShapeGrid>
            </LibraryList>
            <Thumb $width={7} $height="381px" $color="#d3d3d3" />
          </LibraryScroll>
        </Library>

        <Workspace>
          <DocTabs>
            {DOCS.map((doc) => (
              <DocTab key={doc.name} $first={doc.first} $active={doc.active}>
                {doc.first ? (
                  <svg width="25" height="16" viewBox="0 0 25 16">
                    <path d="M0 8l9-7v4h10v6H9v4z" fill="#999" /><path d="M21 2h2v12h-2z" fill="#999" />
                  </svg>
                ) : (
                  <Icon name="doc" size={14} />
                )}
                <span>{doc.name}</span>
                {doc.dirty ? <Unsaved /> : <button aria-label={`关闭${doc.name}`}><Icon name="close" size={13} /></button>}
              </DocTab>
            ))}
            <DocTabActions>
              <button aria-label="后一个标签"><Icon name="arrowRight" size={19} /></button>
              <button aria-label="新建绘图"><Icon name="plus" size={15} /></button>
            </DocTabActions>
          </DocTabs>
          <RulerStrip><TopRuler /></RulerStrip>
          <DrawRow>
            <SideRuler><LeftRuler /></SideRuler>
            <Canvas>
              <Sheet>
                <GridLines />
                <Lane $x={38} $y={38} $w={171} $h={60} $fill="#4d84da">企业</Lane>
                <Lane $x={397} $y={38} $w={200} $h={60} $fill="#45c281">离岸通平台</Lane>
                <Lane $x={761} $y={38} $w={172} $h={60} $fill="#febe29">银行</Lane>
                <Step $x={48} $y={137} $w={152} $h={42}>注册</Step>
                <Step $x={46} $y={206} $w={152} $h={42}>登录</Step>
                <Step $x={771} $y={269} $w={151} $h={42} $bank>注册</Step>
                <Step $x={770} $y={335} $w={151} $h={42} $bank>登录</Step>
                <Decision $x={448} $y={116} $w={99} $h={83}><span>审核</span><span>企业信息</span></Decision>
                <Decision $x={448} $y={249} $w={99} $h={83}><span>审核</span><span>银行信息</span></Decision>
                <Decision $x={97} $y={341} $w={100} $h={82} $blue>GSBN</Decision>
                <Connectors />
                <Verdict $x={308} $y={214} $w={67} $h={27}>通过</Verdict>
                <Verdict $x={586} $y={342} $w={67} $h={27}>通过</Verdict>
                <Handles />
              </Sheet>
            </Canvas>
            <ScrollTrack><Thumb $width={8} $height="248px" $margin="38px 1px 0" $color="#bdbdbd" /></ScrollTrack>
          </DrawRow>
        </Workspace>

        <Rail>
          <RailButton $fold aria-label="收起面板"><Icon name="chevronsRight" size={19} /></RailButton>
          {RAIL.map(([icon, label]) => (
            <RailButton key={icon} aria-label={label} $active={icon === "dataDoc"}><Icon name={icon} size={19} /></RailButton>
          ))}
        </Rail>
        <Properties>
          <PropertiesHeader>
            <span />
            <PanelTitle>数据属性</PanelTitle>
            <button aria-label="弹出面板"><Icon name="export" size={17} /></button>
          </PropertiesHeader>
          <OutlineButton>形状属性</OutlineButton>
        </Properties>
      </Main>

      <Pages>
        <PageCard><Thumbnail />页-1</PageCard>
        <button aria-label="关闭页面预览"><Icon name="closeThin" size={13} /></button>
      </Pages>
      <StatusBar>
        <StatusRow>
          <StatusCell $w={38}><button aria-label="页面预览"><Icon name="panels" size={22} /></button></StatusCell>
          <StatusCell $w={118}>
            <PagePicker aria-label="页面"><PageSelect><option>页-1</option></PageSelect><Caret size={7} /></PagePicker>
          </StatusCell>
          <StatusCell $w={44}><button aria-label="添加页面"><Icon name="plusBold" size={14} /></button></StatusCell>
          <StatusCell $w={80} $current><button>页-1</button></StatusCell>
          <Spacer />
          <StatusTools>
            <StatusButton $after={10}><Icon name="focus" size={17} />专注</StatusButton>
            <StatusButton aria-label="播放"><Icon name="play" size={18} /></StatusButton>
            <StatusButton aria-label="缩小"><Icon name="minus" size={14} /></StatusButton>
            <Zoom type="range" min="0" max="500" defaultValue="100" aria-label="缩放" />
            <StatusButton aria-label="放大"><Icon name="plusBold" size={14} /></StatusButton>
            <StatusButton $after={12}>100%<Caret size={5} /></StatusButton>
            <StatusButton aria-label="适合页面"><Icon name="fit" size={16} /></StatusButton>
            <StatusButton aria-label="适合宽度"><Icon name="fitWidth" size={17} /></StatusButton>
          </StatusTools>
        </StatusRow>
      </StatusBar>

      <Watermark>
        <svg width="34" height="34" viewBox="0 0 34 34">
          <circle cx="17" cy="17" r="16.500" fill="#1c5fc6" />
          <path d="M3 17l4-9 4 2 2-2 4 3 4-3 2 2 4-2 4 9-3-1 1 6-4-3-1 5-2-3v11l-3-3-2 4-2-4-3 3V21l-2 3-1-5-4 3 1-6z" fill="#fff" />
          <circle cx="17" cy="10" r="3" fill="#1c5fc6" stroke="#fff" />
          <path d="M9 16l6-2M25 16l-6-2M14 18l3 3 3-3" fill="none" stroke="#1c5fc6" strokeWidth="1.500" />
        </svg>
        一玩创业网
      </Watermark>
    </Window>
  );
}
